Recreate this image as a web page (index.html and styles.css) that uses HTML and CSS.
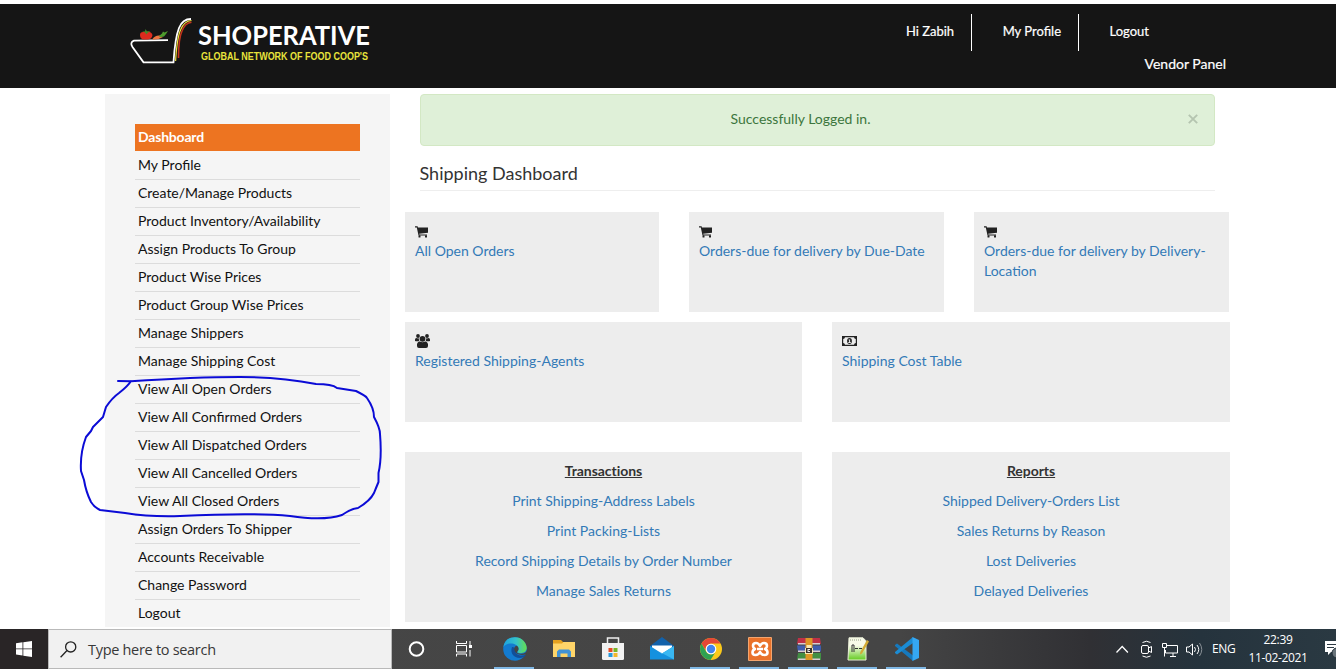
FILE: index.html
```html
<!DOCTYPE html>
<html lang="en">
<head>
<meta charset="utf-8">
<title>Shoperative - Shipping Dashboard</title>
<link rel="stylesheet" href="styles.css">
</head>
<body>
<svg class="defs" width="0" height="0">
  <defs>
    <symbol id="cart" viewBox="0 0 13 12"><path d="M0 .3h2.600l.3 1.200H13v5.200L4.200 7.700l.2 .8H12v1H3.500L1.800 1.400H0z"/><rect x="3.500" y="9.300" width="2" height="2.200" rx=".6"/><rect x="10" y="9.300" width="2" height="2.200" rx=".6"/></symbol>
  </defs>
</svg>
<header class="header">
  <svg class="logo" width="250" height="60" viewBox="125 10 250 60">
    <path d="M168 40.200L134 40.600Q129.500 42.500 132.500 47L143.500 62.300H173.500Q175 38 179 28Q182.500 19 191 19" fill="none" stroke="#fff" stroke-width="1.800"/>
    <path d="M175.600 61Q177 38 180.500 30Q184 21 191.500 20.500" fill="none" stroke="#f3e33b" stroke-width="1.200"/>
    <path d="M178.500 58Q178.500 38 182 31Q185 23 191.500 22.300" fill="none" stroke="#c3341c" stroke-width="1.600"/>
    <path d="M140 35Q140 31.500 144 32Q151 30 152.500 35Q152 39 148 39.500H143Q140 38.500 140 35z" fill="#dc2b1e"/>
    <path d="M142 31l3 .5 .5-2.500 1.500 2.500 3.500-.5-3 2-1 1.500-1.500-2z" fill="#3f8a2a"/>
    <path d="M152 39.500Q155 35 160 35.500L163 37Q158 40 152 39.500z" fill="#ee7540"/>
    <path d="M159 36l3-2.500 1-2 1.500 1 3.500-1.500-2 3-2 2.500-4 .8z" fill="#4e9b2d"/>
    <text x="198" y="45" class="logo-name" textLength="172" lengthAdjust="spacingAndGlyphs">SHOPERATIVE</text>
    <text x="201" y="59.500" class="logo-tag" textLength="167" lengthAdjust="spacingAndGlyphs">GLOBAL NETWORK OF FOOD COOP'S</text>
  </svg>
  <nav class="account">
    <div class="account-links"><a>Hi Zabih</a><a>My Profile</a><a>Logout</a></div>
    <div class="panel-name">Vendor Panel</div>
  </nav>
</header>
<main class="page">
  <aside class="sidebar">
    <ul class="menu">
      <li class="active">Dashboard</li><li>My Profile</li><li>Create/Manage Products</li><li>Product Inventory/Availability</li><li>Assign Products To Group</li><li>Product Wise Prices</li><li>Product Group Wise Prices</li><li>Manage Shippers</li><li>Manage Shipping Cost</li><li>View All Open Orders</li><li>View All Confirmed Orders</li><li>View All Dispatched Orders</li><li>View All Cancelled Orders</li><li>View All Closed Orders</li><li>Assign Orders To Shipper</li><li>Accounts Receivable</li><li>Change Password</li><li>Logout</li>
    </ul>
    <svg class="marker" width="310" height="150" viewBox="75 372 310 150"><path d="M118 381L131 381.300C165 379 205 377 240 377C268 377 288 378.500 316 384Q332 384 337 388L356 391Q366 396 367 398Q374 408 374 417Q380 428 380 434Q382 458 378.500 473V482Q376 488 374 493Q370 501 358 508Q350 509 342 515C330 519 310 519 290 516C260 513 220 514 180 516Q150 517 125 513L100 510Q94 507 91 502Q86 492 84 480L81 471C80 455 83 445 86 437L91 431L93 427L103 417L106 407Q112 398 119 393Q128 386 131 381"/></svg>
  </aside>
  <section class="content">
    <div class="alert"><span>Successfully Logged in.</span><svg class="close" width="10" height="10" viewBox="0 0 10 10"><path d="M.8.8l8.400 8.400M9.200.8L.8 9.200"/></svg></div>
    <h1 class="title">Shipping Dashboard</h1>
    <div class="cards three">
      <div class="card"><svg class="icon" width="13" height="12"><use href="#cart"/></svg><a>All Open Orders</a></div>
      <div class="card"><svg class="icon" width="13" height="12"><use href="#cart"/></svg><a>Orders-due for delivery by Due-Date</a></div>
      <div class="card"><svg class="icon" width="13" height="12"><use href="#cart"/></svg><a>Orders-due for delivery by Delivery-Location</a></div>
    </div>
    <div class="cards two">
      <div class="card"><svg class="icon group" width="15" height="14" viewBox="0 0 15 14"><circle cx="3" cy="2" r="1.900"/><circle cx="12" cy="2" r="1.900"/><circle cx="7.500" cy="4.800" r="2.900"/><path d="M0 7V5.500Q.5 3.800 2 4.200L4 4.500Q3.500 6 4.500 7.300H1zM15 7V5.500Q14.500 3.800 13 4.200L11 4.500Q11.500 6 10.500 7.300H14zM2 12V10Q2.500 7.500 4.800 7.500Q7.500 9 10.200 7.500Q12.500 7.500 13 10V12Q13 14 11 14H4Q2 14 2 12z"/></svg><a>Registered Shipping-Agents</a></div>
      <div class="card"><svg class="icon money" width="15" height="10" viewBox="0 0 15 10"><path fill-rule="evenodd" d="M0 0H15V10H0zM3 1.200Q2.800 2.800 1.200 3V7Q2.800 7.200 3 8.800H12Q12.200 7.200 13.800 7V3Q12.200 2.800 12 1.200z"/><ellipse cx="7.500" cy="5" rx="2.400" ry="3"/><path d="M6.700 3.400h1.400v2.700h.7v.8H6.300v-.8h.8V4.200h-.6z" fill="#ededed"/></svg><a>Shipping Cost Table</a></div>
    </div>
    <div class="cards two lists">
      <div class="card list"><h2>Transactions</h2><a>Print Shipping-Address Labels</a><a>Print Packing-Lists</a><a>Record Shipping Details by Order Number</a><a>Manage Sales Returns</a></div>
      <div class="card list"><h2>Reports</h2><a>Shipped Delivery-Orders List</a><a>Sales Returns by Reason</a><a>Lost Deliveries</a><a>Delayed Deliveries</a></div>
    </div>
  </section>
</main>
<footer class="taskbar">
  <div class="start"><svg width="16" height="16" viewBox="0 0 16 16"><path fill="#fff" d="M0 2.200l6.500-.9v6.200H0zM7.300 1.200L16 0v7.500H7.300zM0 8.300h6.500v6.200L0 13.600zM7.300 8.300H16V16l-8.700-1.200z"/></svg></div>
  <div class="search"><svg width="17" height="17" viewBox="0 0 17 17"><circle cx="10.700" cy="5.900" r="5.100"/><path d="M7 9.500L.6 16.200"/></svg><span>Type here to search</span></div>
  <div class="apps">
    <div class="app"><svg width="24" height="24" viewBox="0 0 24 24"><circle cx="11.500" cy="12" r="6.800" fill="none" stroke="#fff" stroke-width="2"/></svg></div>
    <div class="app"><svg width="24" height="24" viewBox="2 0 24 24"><path d="M4.500 4v2.500h10V4M4.500 19.500V17h10v2.500M4.500 8.500h10V15h-10zM18 4v4M18 13v6.500" fill="none" stroke="#fff"/><rect x="17" y="8" width="3" height="3" fill="#fff"/></svg></div>
    <div class="app open"><svg width="24" height="24" viewBox="0 0 24 24">
      <defs><linearGradient id="eg" x1="0" y1="0" x2="1" y2="0"><stop stop-color="#1ea2e0"/><stop offset=".55" stop-color="#35c2ca"/><stop offset="1" stop-color="#66df4e"/></linearGradient></defs>
      <circle cx="12" cy="12" r="11.800" fill="#137bd0"/><path d="M.3 10Q2 0 12 .2C20 .3 24 7 23.700 11.500C23 16 18 17 14.500 15.500C14 14.500 16 13.500 15.500 11C14 6 5 4.500.3 10z" fill="url(#eg)"/><path d="M9 10C6.500 17 12 22.500 20 20.500Q22 19.500 23 17.800C16 20 12 17 12.500 13Q12 10 9 10z" fill="#124f99"/><path d="M24 13.500Q22 17 18 16.700Q14 16.500 14 15Q16 13 15.500 11Q15 9.300 13.500 8.800Q11 9.500 11.300 12.500Q12.500 19.500 23.500 17.500z" fill="#444"/></svg></div>
    <div class="app"><svg width="24" height="24" viewBox="0 0 24 24"><path d="M1 3h8l2 2h12v15H1z" fill="#e5a11f"/><path d="M1 6.500h9L11.500 5H23v15H1z" fill="#ffd569"/><path d="M5 20v-5.500L7 12.500h10l2 2V20h-3.500v-3.500h-7V20z" fill="#4293d6"/></svg></div>
    <div class="app"><svg width="24" height="24" viewBox="0 0 24 24"><path d="M6.500 8V1h11v7" fill="none" stroke="#eee" stroke-width="1.500"/><path d="M1 6h22v15.500q0 1.500-1.500 1.500h-19Q1 23 1 21.500z" fill="#f2f2f2"/><path d="M7.500 11h4v4h-4z" fill="#e84b24"/><path d="M12.500 11h4v4h-4z" fill="#7ab527"/><path d="M7.500 16h4v4h-4z" fill="#2999dc"/><path d="M12.500 16h4v4h-4z" fill="#f4b72a"/></svg></div>
    <div class="app"><svg width="24" height="24" viewBox="0 0 24 24"><path d="M0 9L12 0l12 9v13H0z" fill="#1261aa"/><path d="M2 8.500h20v6L12 19 2 14z" fill="#fff"/><path d="M0 9l12 7.500L24 9v13.500H0z" fill="#1591df"/><path d="M24 9v13.500L9 14.600l3 1.900z" fill="#39b7f2"/></svg></div>
    <div class="app open"><svg width="24" height="24" viewBox="0 0 24 24"><circle cx="12" cy="12" r="11" fill="#fbc91b"/><path d="M2.500 6.500A11 11 0 0 1 21.500 6.500H12A5.500 5.500 0 0 0 7 14z" fill="#e44736"/><path d="M2.500 6.500A11 11 0 0 0 11.500 23L16.700 14.700A5.500 5.500 0 0 1 7.200 14.700z" fill="#2fa152"/><circle cx="12" cy="12" r="5.300" fill="#fff"/><circle cx="12" cy="12" r="4.200" fill="#4384ec"/></svg></div>
    <div class="app open"><svg width="24" height="24" viewBox="0 0 24 24"><rect width="24" height="24" rx="1" fill="#f3a56f"/><rect x="1" y="1" width="22" height="22" fill="#e9722a"/><path d="M12 9Q10.500 6 8 6Q5 6 5 9Q5 11 7 12Q4.500 13 4.500 15.500Q4.500 18 7.500 18Q10.500 18 12 15Q13.500 18 16.500 18Q19.500 18 19.500 15.500Q19.500 13 17 12Q19 11 19 9Q19 6 16 6Q13.500 6 12 9zM9 12H15" fill="none" stroke="#fff" stroke-width="2.600" stroke-linejoin="round"/></svg></div>
    <div class="app open"><svg width="24" height="24" viewBox="0 0 24 24"><path d="M1 1h22l1 6H0z" fill="#bf3146"/><path d="M0 8.500h24v6H1z" fill="#405eae"/><path d="M1 16h23v7H0z" fill="#428f43"/><path d="M1 6h22v1.500H1zM1 13.500h22V15H1zM1 21.500h22V23H1z" fill="#d9ccd2"/><path d="M8.500 1h7v22h-7z" fill="#de9726"/><path d="M9.500 8h5v3h-5zM8 11h8v6H8z" fill="#f6e8b2"/><path d="M9 11h6v5H9z" fill="#3b302d"/><path d="M10.500 12h2.500v1h-1.500v1H13v1h-2.500z" fill="#eee"/></svg></div>
    <div class="app open"><svg width="24" height="24" viewBox="0 0 24 24"><defs><linearGradient id="np" x1="0" y1="0" x2="0" y2="1"><stop offset=".35" stop-color="#f8fbe9"/><stop offset="1" stop-color="#63cb20"/></linearGradient></defs><path d="M3 .8h14l3 3V23H2z" fill="url(#np)" stroke="#e9eed7"/><path d="M4 3h12" stroke="#97a188" stroke-dasharray="1 1"/><path d="M6 15V8h2v7M9 11.500h3M13 11.500h3" fill="none" stroke="#333"/><path d="M21 3l2 1.500-7 12-2 1 .3-2.500z" fill="#d3ab35"/></svg></div>
    <div class="app open"><svg width="24" height="24" viewBox="0 0 24 24"><path d="M0 8l2-1.500L18 18.500V24L0 9z" fill="#1679bd"/><path d="M0 16l2 1.500L18 6V0L0 15z" fill="#1b8cd4"/><path d="M17.500 0L24 3v18l-6.500 3z" fill="#35a7f2"/></svg></div>
  </div>
  <div class="tray">
    <svg class="tray-icons" width="90" height="20" viewBox="1115 639 90 20" fill="none" stroke="#fff">
      <path d="M1117.500 652.500l5.700-6 5.700 6" stroke-width="1.300"/>
      <rect x="1142.500" y="645.500" width="7" height="8" rx="1.500"/><path d="M1149.500 648l3-1.500v6l-3-1.500M1143.500 642.500q4-2.500 8 0M1143.500 656q4 2.500 8 0"/>
      <path d="M1168 645.500h10.500v7.500h-12v-3M1171 656.500h6M1174 653v3M1163.500 643.500h4v4h-4zM1165.500 647.500v9"/>
      <path d="M1187.500 647h2.500l3.500-3v11l-3.500-3h-2.500zM1195.500 647q2 2.500 0 5M1198 645q3.500 4.500 0 9"/><path d="M1200.500 643q4.500 6.500 0 13" stroke="#899096"/>
    </svg>
    <span class="lang">ENG</span>
    <div class="clock"><span>22:39</span><span>11-02-2021</span></div>
    <svg class="notice" width="12" height="20" viewBox="0 0 12 20"><path d="M1 2h11v11H7l-3 3v-3H1z" fill="#fff"/><path d="M3 5.500h9M3 8.500h7" stroke="#2c3942"/><circle cx="13" cy="14" r="5" fill="#69747b" stroke="#232f38"/></svg>
  </div>
</footer>
</body>
</html>
```
FILE: styles.css
```css
* { box-sizing: border-box; }
body { margin: 0; height: 669px; overflow: hidden; background: #fff; color: #333; font: 14px/20px Lato, sans-serif; display: flex; flex-direction: column; }
.defs { position: absolute; }
.header { height: 88px; flex: none; border-top: 4px solid #fff; background: #151515; display: flex; justify-content: space-between; padding: 6px 110px 0 125px; }
.logo { flex: none; overflow: visible; }
.logo-name { font: 700 26.500px Lato, sans-serif; fill: #fff; }
.logo-tag { font: 700 10px "Liberation Sans", sans-serif; fill: #e9e43c; }
.account { color: #fff; -webkit-text-stroke: .2px #fff; }
.account-links { display: flex; justify-content: flex-end; padding-top: 4px; font-size: 13px; }
.account-links a { height: 37px; line-height: 34px; padding: 0 17px 0 30.500px; border-right: 1px solid #fff; }
.account-links a:last-child { padding-right: 77px; border-right: 0; }
.panel-name { text-align: right; line-height: 20px; padding-top: 3px; }
.page { flex: none; height: 541px; padding: 6px 106px 0 105px; display: flex; gap: 15px; overflow: hidden; }
.sidebar { position: relative; flex: none; width: 285px; height: 533px; padding: 30px 30px 0; background: #f5f5f5; }
.menu { list-style: none; margin: 0; padding: 0; color: #111; }
.menu li { height: 28px; line-height: 25px; padding-left: 3px; border-bottom: 1px solid #dcdcdc; }
.menu li:last-child { border-bottom: 0; }
.menu .active { background: #ed7421; background-clip: padding-box; color: #fff; font-weight: 700; letter-spacing: -.2px; border-color: #f5f5f5; }
.marker { position: absolute; left: -30px; top: 278px; }
.marker path { fill: none; stroke: #0b0bd6; stroke-width: 2; stroke-linecap: round; stroke-linejoin: round; }
.content { flex: 1; min-width: 0; }
.alert { height: 52px; margin: 0 15px; border: 1px solid #d3e8c4; border-radius: 4px; background: #dff0d8; color: #3c763d; display: flex; align-items: center; gap: 8px; padding: 0 16px 2px 0; }
.alert span { flex: 1; text-align: center; }
.close path { stroke: #b5c5b0; stroke-width: 1.900; }
.title { font: 400 18px/24px Lato, sans-serif; height: 45px; margin: 0 15px 21px 14.500px; padding-top: 15px; border-bottom: 1px solid #eee; }
.cards { display: grid; gap: 30px; margin-bottom: 10px; }
.three { grid-template-columns: 254px 255px 255px; }
.two { grid-template-columns: 397px 398px; }
.card { height: 100px; background: #ededed; padding: 9px 10px; display: flex; flex-direction: column; }
.card a { color: #337ab7; }
.icon { fill: #222; margin: 5px 0 3px; flex: none; }
.group { margin: 3px 0; }
.money { margin: 5px 0; }
.lists { margin-top: 30px; }
.list { height: 170px; padding: 9px 0; align-items: center; gap: 10px; }
.list h2 { margin: 0; font: 700 14px/20px Lato, sans-serif; letter-spacing: -.05px; font-variant-ligatures: common-ligatures; text-decoration: underline; }
.taskbar { height: 40px; flex: none; display: flex; background: linear-gradient(90deg, #292526 0, #292526 48px, #464646 49px, #454545 900px, #303034 1090px, #25333d 1200px, #2a3942); }
.start { width: 48px; display: grid; place-items: center; }
.search { width: 344px; background: #f1f1f1; border: 1px solid #b9b9b9; display: flex; align-items: center; gap: 11px; padding-left: 11px; color: #383838; font: 14.500px "Open Sans", sans-serif; }
.search svg { fill: none; stroke: #222; stroke-width: 1.300; }
.search span { letter-spacing: -.3px; }
.apps { display: flex; }
.app { width: 49px; height: 40px; display: grid; place-items: center; position: relative; }
.open::after { content: ""; position: absolute; left: 4px; bottom: 0; width: 40px; height: 2px; background: #80b8e5; }
.tray { flex: 1; display: flex; align-items: center; justify-content: flex-end; color: #fff; font: 12px/18px "Open Sans", sans-serif; }
.lang { width: 24px; margin: 0 12px 0 8px; letter-spacing: -.4px; }
.clock { width: 60px; display: flex; flex-direction: column; align-items: center; letter-spacing: -.35px; margin-right: 16px; white-space: nowrap; }
.notice { flex: none; }
```
